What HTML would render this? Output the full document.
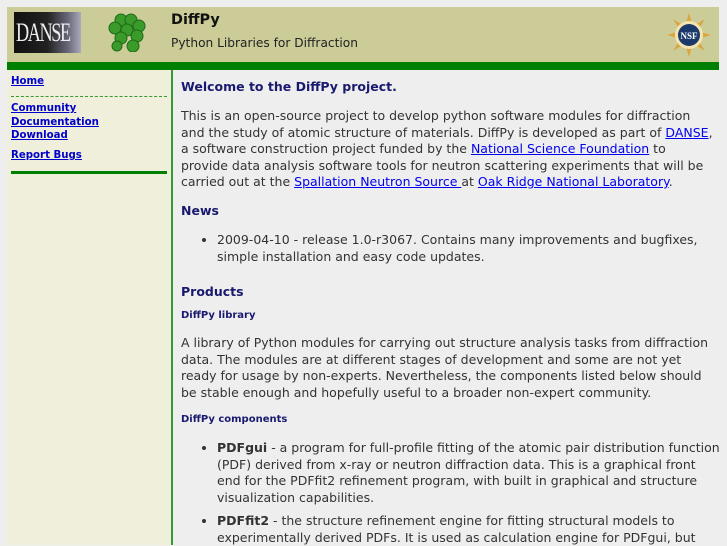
<!DOCTYPE html>
<html><head><meta charset="utf-8"><style>
body{margin:0;width:727px;height:545px;overflow:hidden;background:#eeeeee;font-family:"DejaVu Sans",sans-serif;position:relative;color:#333}
.a{position:absolute}
#hdr{left:7px;top:7px;width:712px;height:55px;background:#cccc99}
#bar{left:7px;top:62px;width:712px;height:8px;background:#008000}
#side{left:7px;top:70px;width:164px;height:475px;background:#efefdc;border-right:2px solid #339933}
#side a{position:absolute;left:4px;font-size:10.2px;font-weight:bold;color:#0000cc;text-decoration:underline}
.t{position:absolute;left:181px;font-size:12.5px;line-height:16.5px;width:530px}
a{color:#0000ee;text-decoration:underline}
h2{margin:0;font-size:12.5px;color:#191970;font-weight:bold}
.h3{font-size:10px;color:#191970;font-weight:bold}
ul{margin:0;padding:0 0 0 36px}
</style></head><body>
<div class="a" id="hdr"></div>
<div class="a" style="left:14px;top:12px;width:67px;height:41px;background:linear-gradient(90deg,#111 0,#222 50%,#667 80%,#aab 100%)"><span style="position:absolute;left:2px;top:6px;color:#eee;font-family:'Liberation Serif',serif;font-size:26px;letter-spacing:-2px;transform:scaleX(.7);transform-origin:left">DANSE</span></div>
<svg class="a" style="left:107px;top:12px" width="40" height="40"><g fill="#3a9a2a" stroke="#1e6b16" stroke-width="1">
<circle cx="14" cy="8" r="6"/><circle cx="24" cy="8" r="6"/><circle cx="32" cy="14" r="6"/><circle cx="8" cy="16" r="6"/><circle cx="20" cy="18" r="6"/><circle cx="30" cy="24" r="6"/><circle cx="14" cy="26" r="6"/><circle cx="26" cy="34" r="6"/><circle cx="10" cy="34" r="5"/></g></svg>
<div class="a" style="left:171px;top:12px;font-size:14.4px;font-weight:bold;color:#111">DiffPy</div>
<div class="a" style="left:171px;top:36px;font-size:12.2px;color:#222">Python Libraries for Diffraction</div>
<svg class="a" style="left:667px;top:13px" width="44" height="44"><g fill="#d9a640"><polygon points="22,0 25,10 19,10"/><polygon points="22,44 25,34 19,34"/><polygon points="0,22 10,19 10,25"/><polygon points="44,22 34,19 34,25"/><polygon points="6,6 14,11 11,14"/><polygon points="38,38 30,33 33,30"/><polygon points="38,6 33,14 30,11"/><polygon points="6,38 11,30 14,33"/></g><circle cx="22" cy="22" r="14" fill="#f3e4b0"/><circle cx="22" cy="22" r="11" fill="#1b3a6b"/><text x="22" y="26" font-size="9" fill="#fff" text-anchor="middle" font-family="Liberation Serif" font-weight="bold">NSF</text></svg>
<div class="a" id="bar"></div>
<div class="a" id="side">
<a style="top:6px">Home</a>
<div style="position:absolute;left:4px;top:26px;width:156px;border-top:1px dashed #339933"></div>
<a style="top:33px">Community</a>
<a style="top:47px">Documentation</a>
<a style="top:60px">Download</a>
<a style="top:80px">Report Bugs</a>
<div style="position:absolute;left:4px;top:101px;width:156px;height:3px;background:#008000"></div>
</div>
<div class="t" style="top:79px"><h2>Welcome to the DiffPy project.</h2></div>
<div class="t" style="top:108px;width:546px;white-space:nowrap">This is an open-source project to develop python software modules for diffraction<br>and the study of atomic structure of materials. DiffPy is developed as part of <a>DANSE</a>,<br>a software construction project funded by the <a>National Science Foundation</a> to<br>provide data analysis software tools for neutron scattering experiments that will be<br>carried out at the <a>Spallation Neutron Source </a>at <a>Oak Ridge National Laboratory</a>.</div>
<div class="t" style="top:203px"><h2>News</h2></div>
<div class="t" style="top:232px"><ul><li>2009-04-10 - release 1.0-r3067. Contains many improvements and bugfixes, simple installation and easy code updates.</li></ul></div>
<div class="t" style="top:284px"><h2>Products</h2></div>
<div class="t h3" style="top:308px">DiffPy library</div>
<div class="t" style="top:335px">A library of Python modules for carrying out structure analysis tasks from diffraction data. The modules are at different stages of development and some are not yet ready for usage by non-experts. Nevertheless, the components listed below should be stable enough and hopefully useful to a broader non-expert community.</div>
<div class="t h3" style="top:412px">DiffPy components</div>
<div class="t" style="top:440px;width:546px;white-space:nowrap"><ul><li><b>PDFgui</b> - a program for full-profile fitting of the atomic pair distribution function<br>(PDF) derived from x-ray or neutron diffraction data. This is a graphical front<br>end for the PDFfit2 refinement program, with built in graphical and structure<br>visualization capabilities.</li><li style="margin-top:7px"><b>PDFfit2</b> - the structure refinement engine for fitting structural models to<br>experimentally derived PDFs. It is used as calculation engine for PDFgui, but</li></ul></div>
</body></html>
